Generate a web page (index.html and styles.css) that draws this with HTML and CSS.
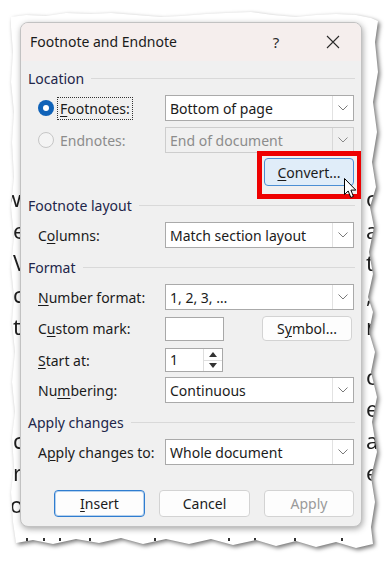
FILE: index.html
```html
<!DOCTYPE html>
<html>
<head>
<meta charset="utf-8">
<link rel="stylesheet" href="styles.css">
</head>
<body>
<div class="scene">
  <div class="paper-wrap">
    <div class="paper">
      <div class="line"><span class="lt lt-w">w</span><span class="rt">o</span></div>
      <div class="line"><span class="lt">e</span><span class="rt">a</span></div>
      <div class="line"><span class="lt">V</span><span class="rt">t</span></div>
      <div class="line"><span class="lt">c</span><span class="rt">, c</span></div>
      <div class="line"><span class="lt">th</span><span class="rt">na</span></div>
      <div class="line line-gap"><span class="lt"></span><span class="rt">or</span></div>
      <div class="line"><span class="lt"></span><span class="rt">e</span></div>
      <div class="line"><span class="lt">c</span><span class="rt">ar</span></div>
      <div class="line"><span class="lt">r</span><span class="rt">ev</span></div>
      <div class="line"><span class="lt lt-o">o</span><span class="rt"></span></div>
      <div class="tops">
        <i class="dot d1"></i><i class="dot d2"></i><i class="dot d3"></i><i class="dot d4"></i><i class="dot d5"></i><i class="dot d6"></i><i class="dot d7"></i><i class="dot d8"></i><i class="dot d9"></i>
      </div>
    </div>
  </div>

  <div class="dialog">
    <div class="titlebar">
      <span class="title">Footnote and Endnote</span>
      <span class="help">?</span>
      <span class="close">
        <svg width="14" height="14" viewBox="0 0 14 14"><path d="M1 1 L13 13 M13 1 L1 13" stroke="#2b2b2b" stroke-width="1.1" fill="none"/></svg>
      </span>
    </div>

    <div class="body">
      <div class="group-head g-loc"><span>Location</span><i class="rule"></i></div>

      <div class="row r-foot">
        <div class="label radio-label">
          <span class="radio on"></span>
          <span class="focus"><u>F</u>ootnotes:</span>
        </div>
        <div class="select"><span class="val">Bottom of page</span><span class="arrow"><svg width="10" height="6" viewBox="0 0 10 6"><path d="M0.5 0.5 L5 5 L9.5 0.5" stroke="#7a7a7a" stroke-width="1" fill="none"/></svg></span></div>
      </div>

      <div class="row r-end">
        <div class="label radio-label disabled">
          <span class="radio off"></span>
          <span class="nofocus">Endnotes:</span>
        </div>
        <div class="select dis"><span class="val">End of document</span><span class="arrow"><svg width="10" height="6" viewBox="0 0 10 6"><path d="M0.5 0.5 L5 5 L9.5 0.5" stroke="#8a8a8a" stroke-width="1" fill="none"/></svg></span></div>
      </div>

      <div class="row r-conv">
        <div class="conv-wrap">
          <button class="btn btn-conv"><u>C</u>onvert...</button>
          <svg class="cursor" width="13" height="21" viewBox="0 0 13 21"><path d="M0.5 0.5 L0.5 16.5 L4.2 13 L6.8 19.5 L9.4 18.4 L6.9 12.1 L11.8 12.1 Z" fill="#fff" stroke="#000" stroke-width="1" stroke-linejoin="miter"/></svg>
        </div>
      </div>

      <div class="group-head g-lay"><span>Footnote layout</span><i class="rule"></i></div>

      <div class="row r-col">
        <div class="label">C<u>o</u>lumns:</div>
        <div class="select"><span class="val">Match section layout</span><span class="arrow"><svg width="10" height="6" viewBox="0 0 10 6"><path d="M0.5 0.5 L5 5 L9.5 0.5" stroke="#7a7a7a" stroke-width="1" fill="none"/></svg></span></div>
      </div>

      <div class="group-head g-fmt"><span>Format</span><i class="rule"></i></div>

      <div class="row r-num">
        <div class="label"><u>N</u>umber format:</div>
        <div class="select"><span class="val">1, 2, 3, …</span><span class="arrow"><svg width="10" height="6" viewBox="0 0 10 6"><path d="M0.5 0.5 L5 5 L9.5 0.5" stroke="#7a7a7a" stroke-width="1" fill="none"/></svg></span></div>
      </div>

      <div class="row r-cust">
        <div class="label">C<u>u</u>stom mark:</div>
        <div class="input"></div>
        <button class="btn btn-sym">S<u>y</u>mbol...</button>
      </div>

      <div class="row r-start">
        <div class="label"><u>S</u>tart at:</div>
        <div class="spin">
          <span class="spin-val">1</span>
          <span class="spin-btns">
            <span class="sb"><svg width="8" height="5" viewBox="0 0 8 5"><path d="M4 0 L8 5 L0 5 Z" fill="#333"/></svg></span>
            <span class="sb sb-down"><svg width="8" height="5" viewBox="0 0 8 5"><path d="M0 0 L8 0 L4 5 Z" fill="#333"/></svg></span>
          </span>
        </div>
      </div>

      <div class="row r-numb">
        <div class="label">Nu<u>m</u>bering:</div>
        <div class="select"><span class="val">Continuous</span><span class="arrow"><svg width="10" height="6" viewBox="0 0 10 6"><path d="M0.5 0.5 L5 5 L9.5 0.5" stroke="#7a7a7a" stroke-width="1" fill="none"/></svg></span></div>
      </div>

      <div class="group-head g-app"><span>Apply changes</span><i class="rule"></i></div>

      <div class="row r-app">
        <div class="label">A<u>p</u>ply changes to:</div>
        <div class="select"><span class="val">Whole document</span><span class="arrow"><svg width="10" height="6" viewBox="0 0 10 6"><path d="M0.5 0.5 L5 5 L9.5 0.5" stroke="#7a7a7a" stroke-width="1" fill="none"/></svg></span></div>
      </div>

      <div class="actions">
        <button class="btn btn-act btn-default"><u>I</u>nsert</button>
        <button class="btn btn-act">Cancel</button>
        <button class="btn btn-act btn-dis">Apply</button>
      </div>
    </div>
  </div>
</div>
</body>
</html>
```

FILE: styles.css
```css
* { box-sizing: border-box; }

body {
  margin: 0;
  background: #ffffff;
  font-family: "Noto Sans", "Open Sans", sans-serif;
}

.scene {
  display: grid;
  width: 391px;
  height: 561px;
  overflow: hidden;
}

/* torn paper behind the dialog */
.paper-wrap {
  grid-area: 1 / 1;
  margin: 12px 13px 11px 11px;
  filter: drop-shadow(2px 2px 2px rgba(0, 0, 0, 0.55));
}

.paper {
  width: 367px;
  height: 538px;
  background: #ffffff;
  padding-top: 170px;
  font-size: 22px;
  color: #1e1e1e;
  clip-path: polygon(
    0px 5px, 15px 3px, 35px 4px, 55px 1px, 80px 2px, 100px 1px, 125px 3px, 150px 5px, 170px 4px, 195px 2px,
    215px 1px, 240px 0px, 262px 3px, 285px 5px, 305px 3px, 325px 2px, 345px 3px, 360px 6px, 367px 9px,
    364px 30px, 367px 60px, 362px 90px, 366px 120px, 361px 150px, 365px 175px, 359px 195px, 363px 215px,
    358px 240px, 362px 262px, 357px 285px, 362px 300px, 358px 320px, 364px 340px, 360px 360px, 366px 385px,
    361px 410px, 366px 440px, 360px 465px, 364px 490px, 360px 515px, 362px 532px,
    345px 536px, 325px 530px, 305px 535px, 285px 529px, 265px 534px, 245px 528px, 222px 533px, 200px 527px,
    178px 532px, 155px 527px, 132px 532px, 110px 526px, 88px 531px, 65px 527px, 42px 532px, 22px 528px, 5px 531px,
    2px 510px, 0px 480px, 3px 455px, 1px 425px, 4px 400px, 1px 370px, 4px 340px, 1px 310px, 3px 285px,
    0px 255px, 3px 225px, 0px 195px, 3px 165px, 1px 130px, 3px 100px, 0px 70px, 2px 40px, 0px 15px
  );
}

.line {
  display: grid;
  grid-template-columns: 355px auto;
  height: 32px;
  line-height: 32px;
  white-space: nowrap;
}

.line-gap { margin-top: 18px; }

.lt { padding-left: 2px; }
.lt-w { margin-left: -9px; }
.lt-o { margin-left: -3px; }

/* tops of the next line's letters, cut by the torn edge */
.tops {
  margin-top: 18px;
  height: 4px;
  display: flex;
  align-items: flex-start;
}

.dot {
  display: block;
  width: 2px;
  height: 3px;
  background: #333;
  flex: none;
}

.d1 { margin-left: 15px; }
.d2 { margin-left: 15px; }
.d3 { margin-left: 14px; }
.d4 { margin-left: 28px; }
.d5 { margin-left: 63px; }
.d6 { margin-left: 72px; }
.d7 { margin-left: 24px; }
.d8 { margin-left: 38px; }
.d9 { margin-left: 45px; }

/* dialog */
.dialog {
  grid-area: 1 / 1;
  align-self: start;
  justify-self: start;
  margin: 22px 0 0 20px;
  width: 342px;
  height: 505px;
  border: 1px solid #c2c2c2;
  border-radius: 8px;
  background: #f0f0f0;
  box-shadow: 1px 2px 6px rgba(0, 0, 0, 0.35);
  overflow: hidden;
  position: relative;
  z-index: 1;
  display: flex;
  flex-direction: column;
  font-size: 14px;
  color: #1b1b1b;
}

.titlebar {
  height: 38px;
  flex: none;
  background: #f5eeed;
  display: flex;
  align-items: center;
  padding-left: 9px;
  padding-bottom: 1px;
}

.title { flex: 1; font-size: 14px; color: #1b1b1b; }

.help {
  width: 46px;
  margin-right: 11px;
  text-align: center;
  font-size: 15px;
  color: #2b2b2b;
}

.close {
  width: 46px;
  margin-right: 5px;
  display: flex;
  justify-content: center;
  align-items: center;
}

.body {
  flex: 1;
  display: flex;
  flex-direction: column;
  padding: 7px 6px 10px 7px;
}

.group-head {
  height: 20px;
  display: flex;
  align-items: center;
  gap: 7px;
  color: #22264a;
  flex: none;
}

.rule {
  flex: 1;
  height: 1px;
  background: #d9d9d9;
}

.row {
  height: 26px;
  display: flex;
  align-items: center;
  padding-left: 10px;
  flex: none;
}

.label {
  width: 127px;
  flex: none;
  white-space: nowrap;
}

u { text-decoration-thickness: 1px; text-underline-offset: 2px; }

.radio-label {
  display: flex;
  align-items: center;
}

.radio {
  width: 16px;
  height: 16px;
  border-radius: 50%;
  flex: none;
  margin-right: 4px;
}

.radio.on {
  background: #0f62b8;
  position: relative;
}

.radio.on::after {
  content: "";
  position: absolute;
  left: 5px;
  top: 5px;
  width: 6px;
  height: 6px;
  border-radius: 50%;
  background: #ffffff;
}

.radio.off {
  border: 1px solid #c6c6c6;
  background: #f4f4f4;
}

.focus {
  outline: 1px dotted #333;
  padding: 0 2px;
  line-height: 21px;
}

.nofocus { padding: 0 2px; }

.disabled { color: #8c8c8c; }

.select {
  width: 189px;
  height: 26px;
  border: 1px solid #aaaaaa;
  background: #ffffff;
  display: flex;
  align-items: center;
  flex: none;
}

.select .val {
  flex: 1;
  padding-left: 4px;
  white-space: nowrap;
}

.select .arrow {
  width: 21px;
  height: 100%;
  border-left: 1px solid #e2e2e2;
  display: flex;
  align-items: center;
  justify-content: center;
}

.select.dis {
  background: #f0f0f0;
  border-color: #cdcdcd;
  color: #8c8c8c;
}

.select.dis .arrow { border-left-color: #d8d8d8; }

.btn {
  font-family: inherit;
  font-size: 14px;
  color: #1b1b1b;
  background: #fdfdfd;
  border: 1px solid #d3d3d3;
  border-radius: 4px;
  padding: 0;
  text-align: center;
}

.r-foot { margin-top: 7px; }
.r-end { margin-top: 6px; }

.r-conv {
  margin-top: 5px;
  height: 28px;
  justify-content: flex-end;
  padding-right: 1px;
}

.conv-wrap {
  position: relative;
  width: 90px;
  height: 28px;
}

.btn-conv {
  width: 90px;
  height: 28px;
  background: #e0edf9;
  border-color: #4c8fd4;
}

.conv-wrap::before {
  content: "";
  position: absolute;
  left: -7px;
  right: -8px;
  top: -7px;
  bottom: -13px;
  border: 5px solid #ee0000;
  pointer-events: none;
}

.cursor {
  position: absolute;
  left: 80px;
  top: 20px;
}

.g-lay { margin-top: 9px; }
.r-col { margin-top: 7px; }
.g-fmt { margin-top: 9px; }
.r-num { margin-top: 7px; }

.r-cust { margin-top: 6px; height: 25px; }

.input {
  width: 59px;
  height: 24px;
  border: 1px solid #a8a8a8;
  background: #ffffff;
  flex: none;
}

.btn-sym {
  width: 90px;
  height: 25px;
  margin-left: 38px;
}

.r-start { margin-top: 7px; height: 24px; }

.spin {
  width: 58px;
  height: 24px;
  border: 1px solid #a8a8a8;
  background: #ffffff;
  display: flex;
}

.spin-val {
  flex: 1;
  padding-left: 4px;
  line-height: 22px;
}

.spin-btns {
  width: 19px;
  border-left: 1px solid #dedede;
  display: flex;
  flex-direction: column;
}

.sb {
  flex: 1;
  display: flex;
  align-items: center;
  justify-content: center;
}

.sb-down { border-top: 1px solid #dedede; }

.r-numb { margin-top: 5px; }
.g-app { margin-top: 9px; }
.r-app { margin-top: 7px; }

.actions {
  margin-top: 25px;
  height: 27px;
  display: flex;
  justify-content: flex-end;
  gap: 14px;
  padding-right: 1px;
}

.btn-act {
  width: 91px;
  height: 27px;
}

.btn-act:last-child { width: 90px; }

.btn-default {
  border: 1px solid #2f7dd0;
  box-shadow: inset 0 0 0 1px rgba(47, 125, 208, 0.35);
}

.btn-dis { color: #9a9a9a; }
```
